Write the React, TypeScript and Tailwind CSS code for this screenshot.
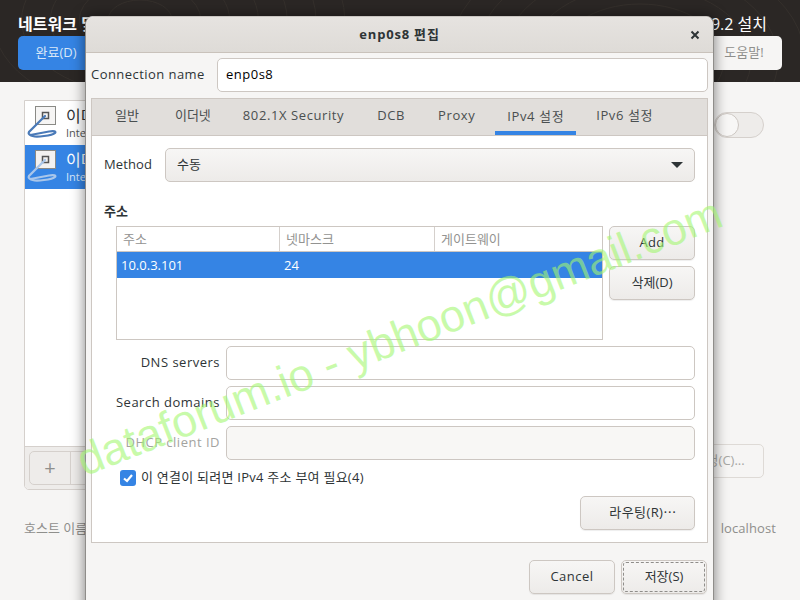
import React from 'react';

const uiFont = "font-['Open_Sans','Noto_Sans_CJK_KR',sans-serif]";

const btn =
  'flex items-center justify-center rounded-[5px] border border-[#cdc7c2] bg-gradient-to-b from-[#f7f6f5] to-[#edebe9] text-[13px] text-[#2e3436] shadow-[0_1px_1px_rgba(0,0,0,0.07)]';
const field = 'h-[34px] rounded-[5px] border border-[#cdc7c2]';

function NetworkIcon({ selected }: { selected?: boolean }) {
  return (
    <svg width="32" height="34" viewBox="0 0 32 34" className="shrink-0">
      <rect x="8.5" y="0.5" width="20" height="18" fill={selected ? '#f3f2f1' : '#f6f5f4'} stroke="#8a8a86" />
      <rect x="15.5" y="6.5" width="6" height="6" fill="none" stroke="#555" strokeWidth="1.5" />
      <path
        d="M18 10 L2 26 Q0.5 29.5 6 28.5 L22 25.5 Q30 24.5 28 27 Q26 29 17 30 Q6 31.5 3 29"
        fill="none"
        stroke={selected ? '#a9c6ea' : '#4a7ab8'}
        strokeWidth="2.2"
        strokeLinecap="round"
      />
    </svg>
  );
}

function Wallpaper() {
  const rings = [20, 38, 56, 74, 92, 110, 128];
  return (
    <svg width="800" height="82" className="absolute left-0 top-0">
      {rings.map((r) => (
        <g key={r} fill="none" stroke="#35302c" strokeWidth="1">
          <ellipse cx="140" cy="20" rx={r * 1.6} ry={r} />
          <ellipse cx="640" cy="60" rx={r * 1.5} ry={r} />
        </g>
      ))}
    </svg>
  );
}

function ListRow({ selected }: { selected?: boolean }) {
  return (
    <div className={`flex h-[44px] items-center gap-[7px] pl-[2px] ${selected ? 'bg-[#3584e4] text-white' : 'text-[#2e3436]'}`}>
      <NetworkIcon selected={selected} />
      <div className="flex flex-col leading-none">
        <span className="text-[16px] leading-[20px]">이더넷</span>
        <span className={`text-[11px] leading-[14px] ${selected ? 'text-[#d7e6f9]' : 'text-[#555]'}`}>Intel Corporation</span>
      </div>
    </div>
  );
}

function Background() {
  return (
    <div className="flex h-[600px] w-[800px] flex-col bg-[#f6f5f4]">
      <div className="relative flex h-[82px] shrink-0 flex-col justify-between bg-[#2b2725] pb-[12px] pl-[18px] pr-[18px] pt-[14px]">
        <Wallpaper />
        <div className="relative flex justify-between pr-[15px] text-white">
          <span className="text-[16px] font-bold leading-[20px]">네트워크 및 호스트 이름</span>
          <span className="text-[16px] leading-[20px]">CentOS 7.9.2 설치</span>
        </div>
        <div className="relative flex justify-between">
          <div className="flex h-[34px] w-[76px] items-center justify-center rounded-[5px] bg-[#3584e4] text-[13px] text-[#d9e7f8]">완료(D)</div>
          <div className="flex h-[34px] w-[76px] items-center justify-center rounded-[5px] bg-[#f6f5f4] text-[13px] text-[#8f8f8c]">도움말!</div>
        </div>
      </div>
      <div className="flex flex-1 gap-[20px] px-[24px] pt-[18px]">
        <div className="flex h-[390px] w-[300px] flex-col overflow-hidden rounded-b-[5px] border border-[#d5d0cc] bg-white">
          <ListRow />
          <ListRow selected />
          <div className="mt-auto h-[43px] border-t border-[#d5d0cc] bg-[#eeecea] p-[4px]">
            <div className="flex h-[34px] w-[84px] rounded-[5px] border border-[#d5d0cc] text-[#8f8f8c]">
              <span className="flex w-[41px] items-center justify-center border-r border-[#d5d0cc] text-[20px] leading-none">+</span>
            </div>
          </div>
        </div>
        <div className="flex h-[390px] flex-1 flex-col items-end justify-between pt-[12px] pr-[12px]">
          <div className="flex h-[26px] w-[50px] rounded-full border border-[#d5d0cc] bg-[#eeecea]">
            <div className="h-[24px] w-[24px] rounded-full border border-[#cdc7c2] bg-[#f8f7f6]" />
          </div>
          <div className="mb-[12px] flex h-[34px] w-[100px] items-center justify-center rounded-[5px] border border-[#dedad6] pr-[16px] text-[13px] text-[#a8a8a5]">구성 설정(C)...</div>
        </div>
      </div>
      <div className="flex justify-between px-[24px] pb-[62px] text-[13px] text-[#8f8f8c]">
        <span>호스트 이름</span>
        <span className="tracking-[0.1px]">localhost</span>
      </div>
    </div>
  );
}

function FormRow({ label, disabled }: { label: string; disabled?: boolean }) {
  return (
    <div className="flex items-center gap-[6px]">
      <span className={`w-[116px] whitespace-nowrap text-right text-[13px] tracking-[0.5px] ${disabled ? 'text-[#a3a3a0]' : 'text-[#2e3436]'}`}>{label}</span>
      <div className={`${field} flex-1 ${disabled ? 'bg-[#f8f7f5]' : 'bg-white'}`} />
    </div>
  );
}

function Dialog() {
  const tabs = ['일반', '이더넷', '802.1X Security', 'DCB', 'Proxy', 'IPv4 설정', 'IPv6 설정'];
  return (
    <div className="absolute left-[85px] top-[16px] flex h-[600px] w-[629px] flex-col rounded-t-[8px] border-x border-t border-x-[#8f8d8a] border-t-[#c9c5c1] bg-[#f6f5f4] shadow-[0_0_14px_rgba(0,0,0,0.5)]">
      <div className="relative flex h-[36px] shrink-0 items-center justify-center rounded-t-[8px] border-b border-[#c9c2bb] bg-gradient-to-b from-[#e6e3e0] to-[#dedbd7]">
        <span className="text-[13px] font-bold tracking-[0.8px] text-[#2e3436]">enp0s8 편집</span>
        <svg width="10" height="10" viewBox="0 0 10 10" className="absolute right-[13px] top-[13px]">
          <path d="M1.5 1.5 L8.5 8.5 M8.5 1.5 L1.5 8.5" stroke="#2e3436" strokeWidth="2" />
        </svg>
      </div>

      <div className="flex items-center pl-[5px] pr-[5px] pt-[5px]">
        <span className="w-[126px] whitespace-nowrap text-[13px] tracking-[0.45px] text-[#2e3436]">Connection name</span>
        <div className={`${field} flex flex-1 items-center bg-white pl-[8px] text-[13px] tracking-[0.5px] text-black`}>enp0s8</div>
      </div>

      <div className="mx-[5px] mt-[6px] flex h-[445px] flex-col border border-[#cdc7c2] bg-white">
        <div className="flex h-[37px] shrink-0 gap-[8px] border-b border-[#cdc7c2] bg-[#e1dedb] pl-[11px] text-[13px] text-[#4a4f50]">
          {tabs.map((t, i) => (
            <div
              key={t}
              className={`flex items-center whitespace-nowrap px-[12px] ${i === 0 ? 'mr-[4px]' : ''} ${i === 2 ? 'mr-[1px]' : ''} ${i === 3 ? 'mr-[1px]' : ''} ${i >= 2 ? 'tracking-[0.6px]' : ''} ${t === 'IPv4 설정' ? 'border-b-[4px] border-[#3584e4] pt-[4px]' : 'pb-[2px]'}`}
            >
              {t}
            </div>
          ))}
        </div>

        <div className="flex flex-1 flex-col px-[12px] pt-[12px]">
          <div className="flex items-center">
            <span className="w-[61px] text-[13px] tracking-[0.1px] text-[#2e3436]">Method</span>
            <div className="flex h-[34px] flex-1 items-center justify-between rounded-[5px] border border-[#cdc7c2] bg-gradient-to-b from-[#f7f6f5] to-[#edebe9] pl-[11px] pr-[11px] text-[13px] text-[#2e3436]">
              수동
              <span className="h-0 w-0 border-x-[6px] border-t-[6px] border-x-transparent border-t-[#2e3436]" />
            </div>
          </div>

          <div className="mt-[20px] text-[13px] font-bold leading-[18px] text-[#2e3436]">주소</div>

          <div className="mt-[6px] flex gap-[6px] pl-[12px]">
            <div className="h-[114px] flex-1 border border-[#cdc7c2] bg-white">
              <div className="grid h-[25px] grid-cols-[163px_155px_1fr] items-stretch border-b border-[#cdc7c2] text-[13px] text-[#939391]">
                <span className="flex items-center border-r border-[#d5d0cc] pl-[6px] pt-[2px]">주소</span>
                <span className="flex items-center border-r border-[#d5d0cc] pl-[6px] pt-[2px]">넷마스크</span>
                <span className="flex items-center pl-[6px] pt-[2px]">게이트웨이</span>
              </div>
              <div className="grid h-[26px] grid-cols-[163px_155px_1fr] items-center bg-[#3584e4] pt-[2px] text-[13px] text-white">
                <span className="pl-[4px]">10.0.3.101</span>
                <span className="pl-[4px]">24</span>
              </div>
            </div>
            <div className="flex w-[86px] flex-col gap-[6px]">
              <div className={`${btn} h-[34px] tracking-[0.3px]`}>Add</div>
              <div className={`${btn} h-[34px]`}>삭제(D)</div>
            </div>
          </div>

          <div className="mt-[6px] flex flex-col gap-[6px]">
            <FormRow label="DNS servers" />
            <FormRow label="Search domains" />
            <FormRow label="DHCP client ID" disabled />
          </div>

          <div className="mt-[9px] flex h-[18px] items-center gap-[5px] pl-[16px]">
            <span className="flex h-[16px] w-[16px] items-center justify-center rounded-[3px] bg-[#3584e4]">
              <svg width="12" height="12" viewBox="0 0 12 12">
                <path d="M2 6.5 L5 9 L10 3" fill="none" stroke="white" strokeWidth="2.2" />
              </svg>
            </span>
            <span className="text-[13px] tracking-[0.25px] text-[#2e3436]">이 연결이 되려면 IPv4 주소 부여 필요(4)</span>
          </div>

          <div className="mt-[9px] flex justify-end">
            <div className={`${btn} h-[34px] w-[115px] pl-[11px] tracking-[0.4px]`}>라우팅(R)⋯</div>
          </div>
        </div>
      </div>

      <div className="mt-[17px] flex justify-end gap-[6px] pr-[6px]">
        <div className={`${btn} h-[34px] w-[86px] tracking-[0.5px]`}>Cancel</div>
        <div className={`${btn} h-[34px] w-[86px] outline-1 -outline-offset-3 outline-dashed outline-[#8f8d8a]`}>저장(S)</div>
      </div>
    </div>
  );
}

export default function App() {
  return (
    <div className={`relative h-[600px] w-[800px] overflow-hidden ${uiFont}`}>
      <Background />
      <Dialog />
      <div className="absolute left-[55px] top-[314px] origin-center -rotate-[21.4deg] whitespace-nowrap font-['Liberation_Sans',sans-serif] text-[45px] leading-none text-[#a3f771]/60">
        dataforum.io - ybhoon@gmail.com
      </div>
    </div>
  );
}
